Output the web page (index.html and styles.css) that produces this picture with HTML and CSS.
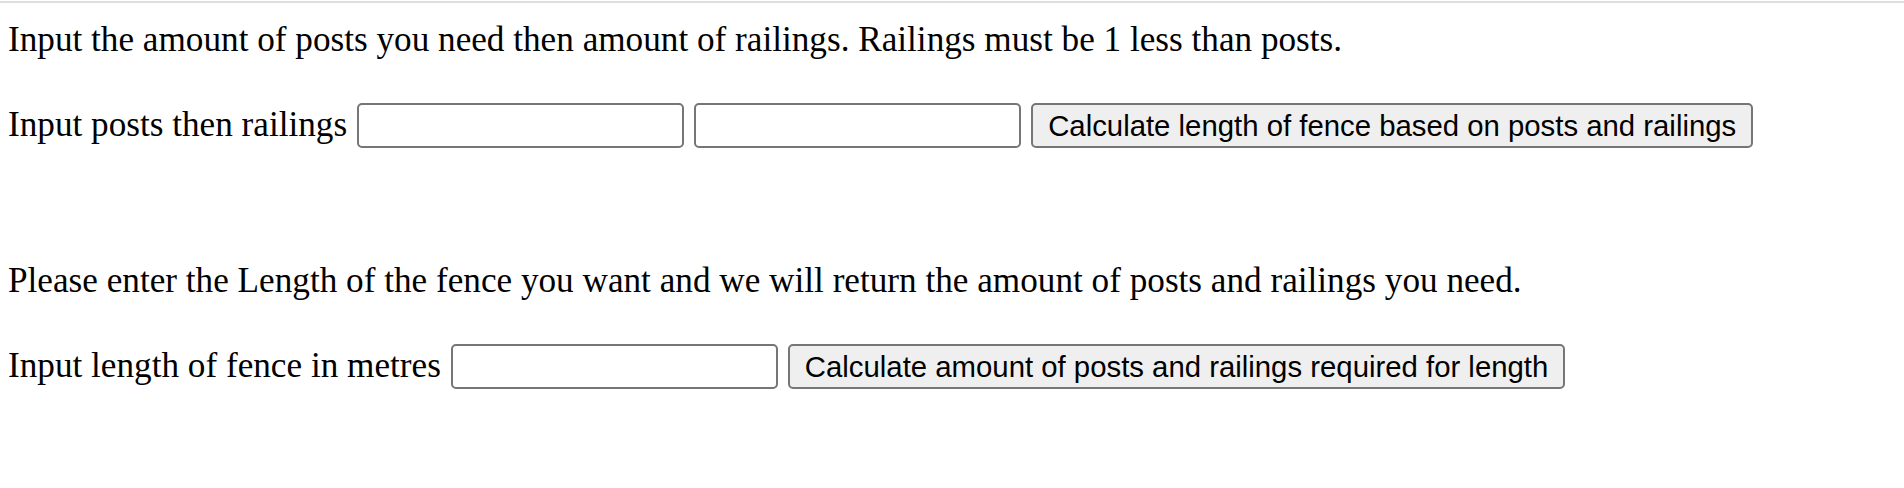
FILE: index.html
```html
<!DOCTYPE html>
<html>
<head>
<meta charset="utf-8">
<link rel="stylesheet" href="styles.css">
</head>
<body>
<div class="page">
  <p class="intro">Input the amount of posts you need then amount of railings. Railings must be 1 less than posts.</p>
  <div class="row">
    <span class="label">Input posts then railings</span>
    <input class="field" type="text">
    <input class="field" type="text">
    <button class="btn">Calculate length of fence based on posts and railings</button>
  </div>
  <p class="intro second">Please enter the Length of the fence you want and we will return the amount of posts and railings you need.</p>
  <div class="row">
    <span class="label">Input length of fence in metres</span>
    <input class="field" type="text">
    <button class="btn">Calculate amount of posts and railings required for length</button>
  </div>
</div>
</body>
</html>
```

FILE: styles.css
```css
html, body {
  margin: 0;
  padding: 0;
  background: #ffffff;
}

body {
  font-family: "Liberation Serif", "Times New Roman", serif;
  font-size: 35.2px;
  color: #000;
}

.page {
  margin-top: 1px;
  border-top: 2px solid #dedede;
  padding: 0 8px;
}

.intro {
  margin: 17px 0 0 0;
  line-height: normal;
  white-space: nowrap;
}

.intro.second {
  margin-top: 113px;
}

.row {
  display: flex;
  align-items: baseline;
  gap: 10px;
  margin-top: 43px;
}

.label {
  white-space: nowrap;
  line-height: normal;
}

.field {
  box-sizing: border-box;
  width: 327px;
  height: 45px;
  margin: 0;
  padding: 2px 4px;
  border: 2px solid #767676;
  border-radius: 5px;
  background: #fff;
  font-family: "Liberation Sans", Arial, sans-serif;
  font-size: 29.33px;
}

.btn {
  box-sizing: border-box;
  height: 45px;
  margin: 0;
  padding: 0 15px;
  border: 2px solid #767676;
  border-radius: 5px;
  background: #efefef;
  color: #000;
  font-family: "Liberation Sans", Arial, sans-serif;
  font-size: 29.33px;
  white-space: nowrap;
}
```
